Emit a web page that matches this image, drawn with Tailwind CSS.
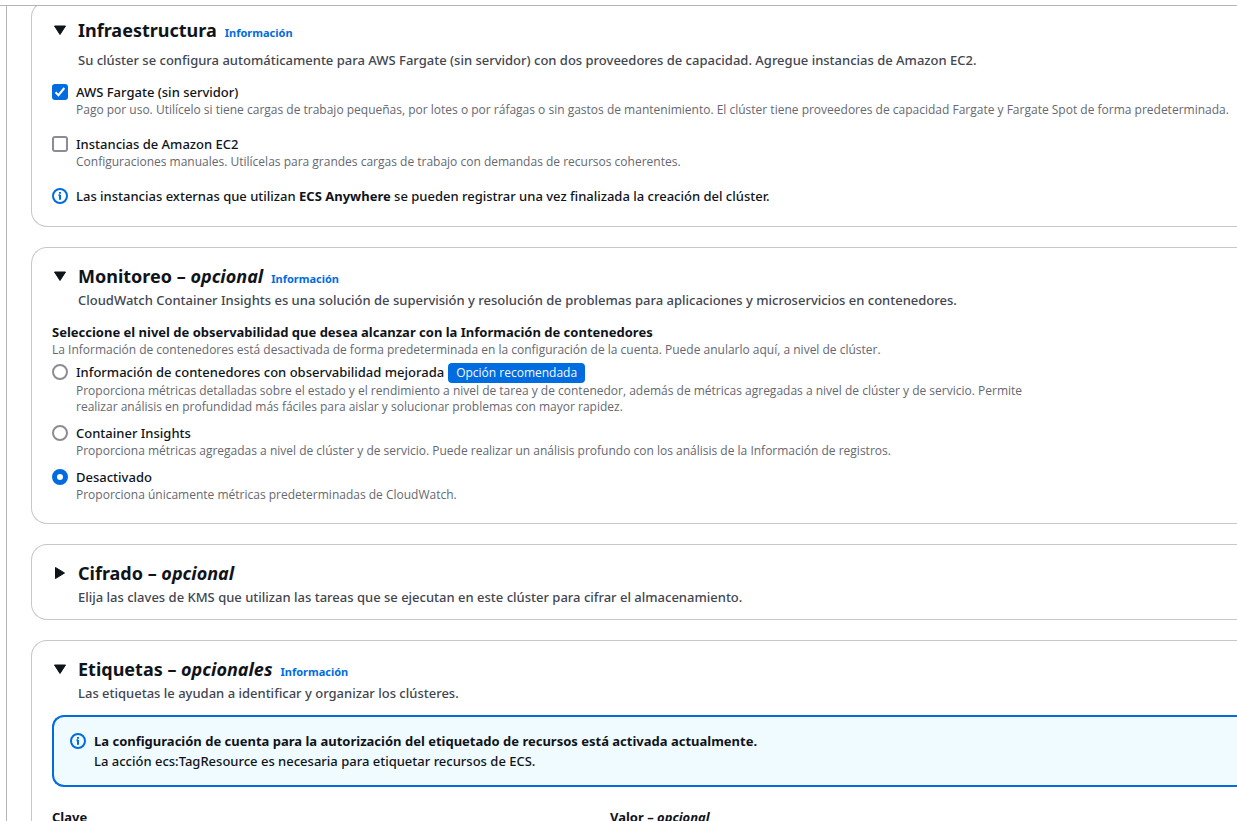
<!DOCTYPE html>
<html lang="es">
<head>
<meta charset="utf-8">
<meta name="viewport" content="width=device-width, initial-scale=1">
<title>Crear clúster</title>
<script src="https://cdn.jsdelivr.net/npm/@tailwindcss/browser@4"></script>
</head>
<body class="flex h-screen flex-col overflow-hidden bg-white font-['Noto_Sans',sans-serif] text-[13px] leading-5 font-medium text-[#0f141a]">
<div class="h-[6px] shrink-0 border-b border-[#b4b4bb]"></div>
<main class="ml-[6px] min-h-0 flex-1 overflow-hidden border-l border-[#b4b4bb] pl-6">
  <div class="-mt-[5px] flex flex-col gap-5">

    <section class="rounded-l-2xl border border-r-0 border-[#c6c6cd] pt-4 pb-5 pl-5">
      <div class="flex items-center">
        <button type="button" aria-label="Contraer Infraestructura" aria-expanded="true" class="mr-[10px] size-4"><svg viewBox="0 0 16 16" class="size-4" fill="#0f141a" stroke="#0f141a" stroke-linejoin="round"><path d="M2.500 4h11L8 12.500z"/></svg></button>
        <div class="flex items-baseline gap-2"><h2 class="text-[18px] leading-6 font-bold">Infraestructura</h2><a href="#" class="text-[11px] leading-4 font-bold text-[#006ce0]">Información</a></div>
      </div>
      <p class="mt-2 pl-[26px] text-[#424650]">Su clúster se configura automáticamente para AWS Fargate (sin servidor) con dos proveedores de capacidad. Agregue instancias de Amazon EC2.</p>
      <div class="mt-3 flex gap-2">
        <span class="relative mt-[2px] size-4 shrink-0"><input id="fargate" type="checkbox" checked class="block size-4 appearance-none rounded-[3px] border-2 border-[#8c8c94] checked:border-[#006ce0] checked:bg-[#006ce0]"><svg viewBox="0 0 16 16" class="pointer-events-none absolute inset-0 size-4" fill="none" stroke="#fff" stroke-width="2"><path d="M3.500 8.200l3 3L12.300 4"/></svg></span>
        <div><label for="fargate" class="block">AWS Fargate (sin servidor)</label><p class="font-['Open_Sans',sans-serif] text-[12px] leading-4 font-normal text-[#656871]">Pago por uso. Utilícelo si tiene cargas de trabajo pequeñas, por lotes o por ráfagas o sin gastos de mantenimiento. El clúster tiene proveedores de capacidad Fargate y Fargate Spot de forma predeterminada.</p></div>
      </div>
      <div class="mt-4 flex gap-2">
        <input id="ec2" type="checkbox" class="mt-[2px] block size-4 shrink-0 appearance-none rounded-[3px] border-2 border-[#8c8c94]">
        <div><label for="ec2" class="block">Instancias de Amazon EC2</label><p class="font-['Open_Sans',sans-serif] text-[12px] leading-4 font-normal text-[#656871]">Configuraciones manuales. Utilícelas para grandes cargas de trabajo con demandas de recursos coherentes.</p></div>
      </div>
      <div class="mt-4 flex items-center gap-2">
        <svg viewBox="0 0 16 16" class="size-4 shrink-0" fill="none" stroke="#006ce0" stroke-width="2"><circle cx="8" cy="8" r="7"/><path d="M8 4v1.700M6.500 7.200H8M8 6.700v5"/></svg>
        <p>Las instancias externas que utilizan <b>ECS Anywhere</b> se pueden registrar una vez finalizada la creación del clúster.</p>
      </div>
    </section>

    <section class="rounded-l-2xl border border-r-0 border-[#c6c6cd] pt-4 pb-5 pl-5">
      <div class="flex items-center">
        <button type="button" aria-label="Contraer Monitoreo" aria-expanded="true" class="mr-[10px] size-4"><svg viewBox="0 0 16 16" class="size-4" fill="#0f141a" stroke="#0f141a" stroke-linejoin="round"><path d="M2.500 4h11L8 12.500z"/></svg></button>
        <div class="flex items-baseline gap-2"><h2 class="text-[18px] leading-6 font-bold">Monitoreo – <i>opcional</i></h2><a href="#" class="text-[11px] leading-4 font-bold text-[#006ce0]">Información</a></div>
      </div>
      <p class="mt-[2px] pl-[26px] text-[#424650]">CloudWatch Container Insights es una solución de supervisión y resolución de problemas para aplicaciones y microservicios en contenedores.</p>
      <fieldset class="mt-3">
        <legend class="font-bold">Seleccione el nivel de observabilidad que desea alcanzar con la Información de contenedores</legend>
        <p class="font-['Open_Sans',sans-serif] text-[12px] leading-4 font-normal text-[#656871]">La Información de contenedores está desactivada de forma predeterminada en la configuración de la cuenta. Puede anularlo aquí, a nivel de clúster.</p>
        <div class="mt-1 flex flex-col gap-2">
          <div class="flex gap-2">
            <input id="mejorada" name="obs" type="radio" class="mt-[2px] block size-4 shrink-0 appearance-none rounded-full border-2 border-[#8c8c94]">
            <div><div class="flex gap-1"><label for="mejorada">Información de contenedores con observabilidad mejorada</label><span class="mt-px rounded bg-[#006ce0] px-2 font-['Open_Sans',sans-serif] text-[12px] font-normal text-[#f9f9fa]">Opción recomendada</span></div><p class="max-w-[960px] font-['Open_Sans',sans-serif] text-[12px] leading-4 font-normal text-[#656871]">Proporciona métricas detalladas sobre el estado y el rendimiento a nivel de tarea y de contenedor, además de métricas agregadas a nivel de clúster y de servicio. Permite realizar análisis en profundidad más fáciles para aislar y solucionar problemas con mayor rapidez.</p></div>
          </div>
          <div class="flex gap-2">
            <input id="insights" name="obs" type="radio" class="mt-[2px] block size-4 shrink-0 appearance-none rounded-full border-2 border-[#8c8c94]">
            <div><label for="insights" class="block">Container Insights</label><p class="font-['Open_Sans',sans-serif] text-[12px] leading-4 font-normal text-[#656871]">Proporciona métricas agregadas a nivel de clúster y de servicio. Puede realizar un análisis profundo con los análisis de la Información de registros.</p></div>
          </div>
          <div class="flex gap-2">
            <input id="desactivado" name="obs" type="radio" checked class="mt-[2px] block size-4 shrink-0 appearance-none rounded-full border-[5px] border-[#006ce0]">
            <div><label for="desactivado" class="block">Desactivado</label><p class="font-['Open_Sans',sans-serif] text-[12px] leading-4 font-normal text-[#656871]">Proporciona únicamente métricas predeterminadas de CloudWatch.</p></div>
          </div>
        </div>
      </fieldset>
    </section>

    <section class="rounded-l-2xl border border-r-0 border-[#c6c6cd] pt-4 pb-3 pl-5">
      <div class="flex items-center">
        <button type="button" aria-label="Expandir Cifrado" aria-expanded="false" class="mr-[10px] size-4"><svg viewBox="0 0 16 16" class="size-4" fill="#0f141a" stroke="#0f141a" stroke-linejoin="round"><path d="M3.500 2.500v11L12.500 8z"/></svg></button>
        <h2 class="text-[18px] leading-6 font-bold">Cifrado – <i>opcional</i></h2>
      </div>
      <p class="mt-[2px] pl-[26px] text-[#424650]">Elija las claves de KMS que utilizan las tareas que se ejecutan en este clúster para cifrar el almacenamiento.</p>
    </section>

    <section class="rounded-l-2xl border border-r-0 border-[#c6c6cd] pt-4 pb-5 pl-5">
      <div class="flex items-center">
        <button type="button" aria-label="Contraer Etiquetas" aria-expanded="true" class="mr-[10px] size-4"><svg viewBox="0 0 16 16" class="size-4" fill="#0f141a" stroke="#0f141a" stroke-linejoin="round"><path d="M2.500 4h11L8 12.500z"/></svg></button>
        <div class="flex items-baseline gap-2"><h2 class="text-[18px] leading-6 font-bold">Etiquetas – <i>opcionales</i></h2><a href="#" class="text-[11px] leading-4 font-bold text-[#006ce0]">Información</a></div>
      </div>
      <p class="mt-[2px] pl-[26px] text-[#424650]">Las etiquetas le ayudan a identificar y organizar los clústeres.</p>
      <div class="mt-3 flex gap-2 rounded-l-xl border-2 border-r-0 border-[#006ce0] bg-[#f0fbff] px-4 py-[14px]">
        <svg viewBox="0 0 16 16" class="mt-[2px] size-4 shrink-0" fill="none" stroke="#006ce0" stroke-width="2"><circle cx="8" cy="8" r="7"/><path d="M8 4v1.700M6.500 7.200H8M8 6.700v5"/></svg>
        <div><p class="font-bold">La configuración de cuenta para la autorización del etiquetado de recursos está activada actualmente.</p><p>La acción ecs:TagResource es necesaria para etiquetar recursos de ECS.</p></div>
      </div>
      <div class="mt-5 grid grid-cols-[558px_1fr] font-bold"><span>Clave</span><span>Valor – <i>opcional</i></span></div>
    </section>
  </div>
</main>
</body>
</html>
